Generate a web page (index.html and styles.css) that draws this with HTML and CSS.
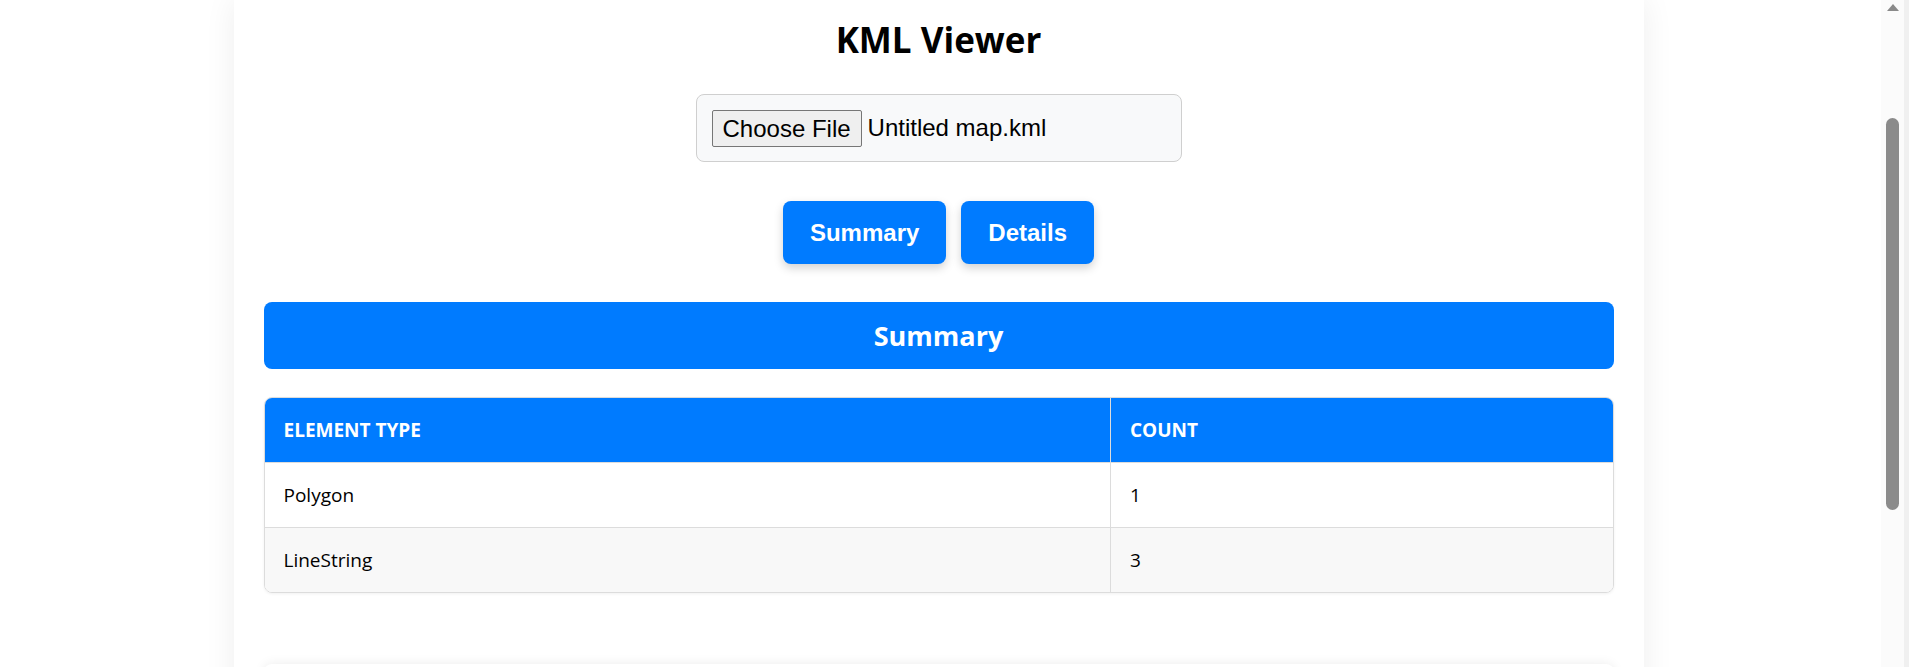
FILE: index.html
```html
<!DOCTYPE html>
<html lang="en">
<head>
<meta charset="utf-8">
<title>KML Viewer</title>
<link rel="stylesheet" href="styles.css">
</head>
<body>
<div class="viewport">
  <main class="page">
    <div class="card">
      <h1 class="title">KML Viewer</h1>
      <div class="file-row">
        <label class="file-box">
          <span class="file-btn">Choose File</span>
          <span class="file-name">Untitled map.kml</span>
        </label>
      </div>
      <div class="tabs">
        <button class="tab">Summary</button>
        <button class="tab">Details</button>
      </div>
      <h2 class="section-bar">Summary</h2>
      <div class="table-wrap">
        <table class="summary-table">
          <thead>
            <tr><th class="col-type">Element Type</th><th>Count</th></tr>
          </thead>
          <tbody>
            <tr><td class="col-type">Polygon</td><td>1</td></tr>
            <tr class="alt"><td class="col-type">LineString</td><td>3</td></tr>
          </tbody>
        </table>
      </div>
      <div class="next-section"></div>
    </div>
  </main>
  <aside class="scrollbar">
    <span class="scroll-arrow"></span>
    <span class="scroll-thumb"></span>
  </aside>
</div>
</body>
</html>
```

FILE: styles.css
```css
* { box-sizing: border-box; }
html, body { margin: 0; padding: 0; height: 100%; overflow: hidden; background: #fff; }
body { font-family: "Open Sans", "Noto Sans", sans-serif; color: #000; }

.viewport { display: flex; height: 100vh; }
.page { flex: 1; display: flex; justify-content: center; align-items: flex-start; overflow: hidden; padding-right: 4px; }

.card {
  flex-shrink: 0;
  width: 1410px;
  min-height: 100%;
  padding: 16px 30px 0;
  background: #fff;
  box-shadow: 0 0 30px rgba(0,0,0,0.07);
}

.title {
  margin: 0;
  font-size: 35px;
  line-height: 48px;
  font-weight: 700;
  text-align: center;
}

.file-row { display: flex; justify-content: center; margin-top: 30px; }
.file-box {
  width: 486px;
  height: 68px;
  display: flex;
  align-items: center;
  padding: 15px;
  background: #f8f9fa;
  border: 1px solid #cfcfcf;
  border-radius: 8px;
  font-family: "Liberation Sans", Arial, sans-serif;
  font-size: 24px;
}
.file-btn {
  padding: 3px 10px;
  line-height: 29px;
  border: 1px solid #767676;
  border-radius: 2px;
  background: #efefef;
  color: #000;
  margin-right: 6px;
}
.file-name { color: #000; }

.tabs { display: flex; justify-content: center; gap: 15px; margin-top: 39px; }
.tab {
  font-family: "Liberation Sans", Arial, sans-serif;
  font-size: 24px;
  font-weight: 700;
  line-height: 29px;
  color: #fff;
  background: #007bff;
  border: none;
  border-radius: 8px;
  padding: 17px 27px;
  box-shadow: 0 4px 10px rgba(0,0,0,0.18);
}

.section-bar {
  margin: 38px 0 0;
  background: #007bff;
  color: #fff;
  border-radius: 8px;
  text-align: center;
  font-size: 27px;
  font-weight: 700;
  line-height: 37px;
  padding: 15px;
}

.table-wrap {
  margin-top: 28px;
  border: 1px solid #dcdcdc;
  border-radius: 8px;
  overflow: hidden;
  box-shadow: 0 1px 3px rgba(0,0,0,0.06);
}
.summary-table { width: 100%; border-collapse: collapse; table-layout: fixed; }
.summary-table th, .summary-table td {
  text-align: left;
  padding: 20px 19px;
  line-height: 24px;
  font-size: 19px;
}
.summary-table th {
  background: #007bff;
  color: #fff;
  font-weight: 700;
  text-transform: uppercase;
  border-bottom: 1px solid #dcdcdc;
}
.summary-table td { border-bottom: 1px solid #dcdcdc; }
.summary-table tbody tr:last-child td { border-bottom: none; }
.summary-table .col-type { width: 846px; border-right: 1px solid #dcdcdc; }
.summary-table .alt td { background: #f8f8f8; }

.next-section {
  margin-top: 71px;
  height: 60px;
  background: #fff;
  box-shadow: 0 0 12px rgba(0,0,0,0.08);
  border-radius: 8px;
}

.scrollbar {
  width: 28px;
  flex-shrink: 0;
  background: #fbfbfb;
  border-right: 5px solid #f0f0f0;
  display: flex;
  flex-direction: column;
  align-items: center;
  padding-top: 4px;
}
.scroll-arrow {
  width: 0; height: 0;
  border-left: 6px solid transparent;
  border-right: 6px solid transparent;
  border-bottom: 7px solid #8a8a8a;
}
.scroll-thumb {
  margin-top: 107px;
  width: 13px;
  height: 392px;
  background: #8b8b8b;
  border-radius: 7px;
}
```
